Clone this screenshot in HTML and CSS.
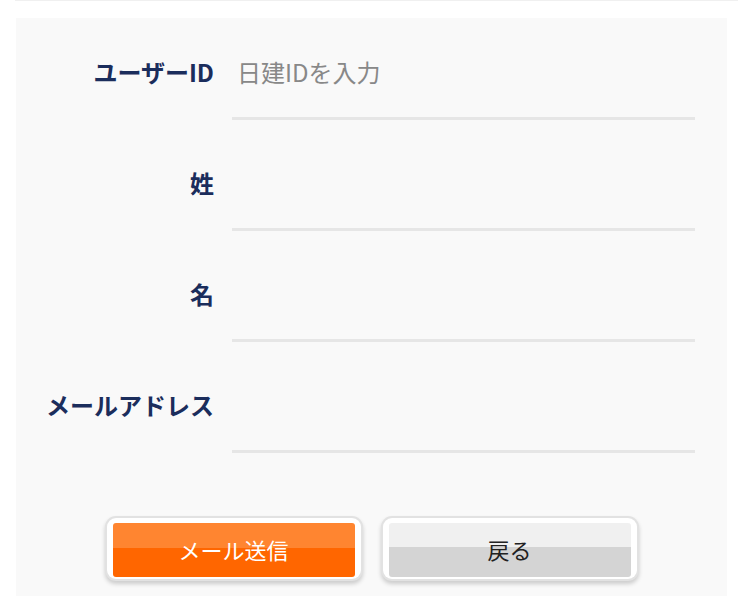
FILE: index.html
```html
<!DOCTYPE html>
<html lang="ja">
<head>
<meta charset="utf-8">
<link rel="stylesheet" href="styles.css">
</head>
<body>
<div class="topline"></div>
<div class="panel">
  <div class="rows">
    <div class="row">
      <div class="label">ユーザーID</div>
      <div class="input placeholder">日建IDを入力</div>
    </div>
    <div class="row">
      <div class="label">姓</div>
      <div class="input"></div>
    </div>
    <div class="row">
      <div class="label">名</div>
      <div class="input"></div>
    </div>
    <div class="row">
      <div class="label">メールアドレス</div>
      <div class="input"></div>
    </div>
  </div>
  <div class="buttons">
    <div class="btn btn-primary"><div class="btn-inner">メール送信</div></div>
    <div class="btn btn-secondary"><div class="btn-inner">戻る</div></div>
  </div>
</div>
</body>
</html>
```
FILE: styles.css
```css
html, body {
  margin: 0;
  padding: 0;
  background: #ffffff;
  font-family: "Noto Sans CJK JP", "Noto Sans", sans-serif;
}
.topline {
  height: 1px;
  margin-left: 15px;
  background: #f0f0f0;
}
.panel {
  margin: 17px 0 0 16px;
  width: 711px;
  background: #f9f9f9;
  padding: 30px 0 17px 0;
  box-sizing: border-box;
}
.rows {
  display: flex;
  flex-direction: column;
  gap: 39px;
}
.row {
  display: grid;
  grid-template-columns: 198px 463px;
  column-gap: 18px;
  align-items: start;
}
.label {
  text-align: right;
  font-size: 24px;
  line-height: 48px;
  font-weight: bold;
  color: #1b2d5c;
  white-space: nowrap;
}
.input {
  height: 69px;
  box-sizing: content-box;
  border-bottom: 3px solid #e6e6e6;
  padding-left: 5px;
  font-size: 24px;
  line-height: 48px;
  color: #888888;
}
.buttons {
  margin-top: 65px;
  display: flex;
  justify-content: center;
  gap: 22px;
}
.btn {
  width: 254px;
  box-sizing: border-box;
  padding: 5px 6px 2px 6px;
  background: #ffffff;
  border-radius: 9px;
  box-shadow: 0 0 0 2px #e2e2e2, 0 3px 4px 2px rgba(0, 0, 0, 0.18);
}
.btn-inner {
  height: 54px;
  border-radius: 3px;
  text-align: center;
  font-size: 22px;
  line-height: 52px;
}
.btn-primary .btn-inner {
  background: linear-gradient(to bottom, #ff8530 0, #ff8530 25px, #ff6600 25px, #ff6600 100%);
  color: #ffffff;
}
.btn-secondary .btn-inner {
  background: linear-gradient(to bottom, #f0f0f0 0, #f0f0f0 24px, #d4d4d4 24px, #d4d4d4 100%);
  color: #222222;
}
```
